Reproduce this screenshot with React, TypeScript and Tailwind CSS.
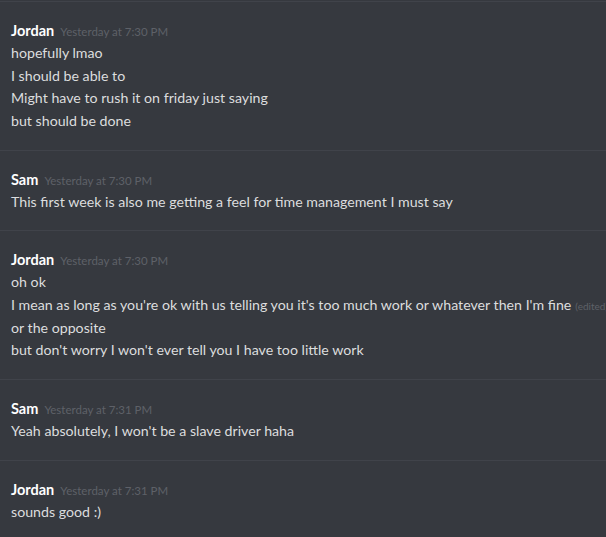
const groups = [
  {
    author: 'Jordan',
    time: 'Yesterday at 7:30 PM',
    lines: [
      { text: 'hopefully lmao' },
      { text: 'I should be able to' },
      { text: 'Might have to rush it on friday just saying' },
      { text: 'but should be done' },
    ],
  },
  {
    author: 'Sam',
    time: 'Yesterday at 7:30 PM',
    lines: [{ text: 'This first week is also me getting a feel for time management I must say' }],
  },
  {
    author: 'Jordan',
    time: 'Yesterday at 7:30 PM',
    lines: [
      { text: 'oh ok' },
      {
        text: "I mean as long as you're ok with us telling you it's too much work or whatever then I'm fine",
        edited: true,
      },
      { text: 'or the opposite' },
      { text: "but don't worry I won't ever tell you I have too little work" },
    ],
  },
  {
    author: 'Sam',
    time: 'Yesterday at 7:31 PM',
    lines: [{ text: "Yeah absolutely, I won't be a slave driver haha" }],
  },
  {
    author: 'Jordan',
    time: 'Yesterday at 7:31 PM',
    lines: [{ text: 'sounds good :)' }],
  },
]

export default function App() {
  return (
    <div
      className="w-[606px] h-[537px] overflow-hidden bg-[#36393f] pt-[1px]"
      style={{ fontFamily: '"Lato", "Open Sans", sans-serif' }}
    >
      {groups.map((g, i) => (
        <div key={i} className="border-t border-[#40434a] pl-[11px] pt-[18px] pb-[17px]">
          <div className="flex items-baseline h-[22px] leading-[22px] whitespace-nowrap">
            <span className="text-white text-[14.5px] font-bold">{g.author}</span>
            <span className="ml-[6px] text-[11.5px] text-[#5e6168]">{g.time}</span>
          </div>
          {g.lines.map((l, j) => (
            <div key={j} className="text-[#dcddde] text-[14.2px] h-[22.67px] leading-[22.67px] whitespace-nowrap">
              {l.text}
              {l.edited && <span className="ml-[4px] text-[10px] leading-none text-[#5e6168]">(edited)</span>}
            </div>
          ))}
        </div>
      ))}
    </div>
  )
}
